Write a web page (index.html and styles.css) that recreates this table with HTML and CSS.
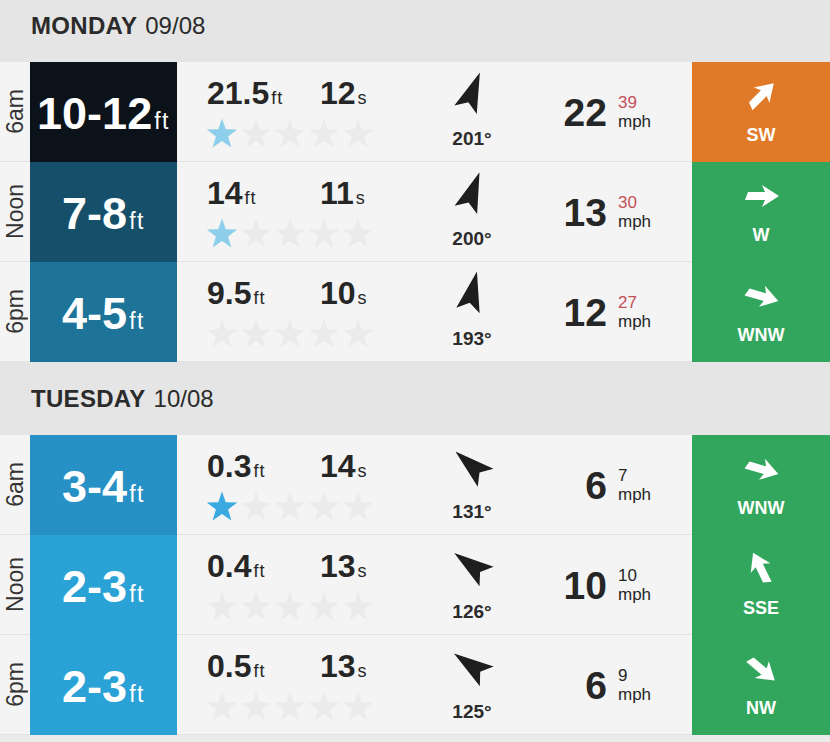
FILE: index.html
```html
<!DOCTYPE html>
<html>
<head>
<meta charset="utf-8">
<link rel="stylesheet" href="styles.css">
</head>
<body>
<svg class="defs" width="0" height="0" aria-hidden="true">
  <symbol id="star" viewBox="0 0 34 30"><polygon points="17,0.5 20.76,11.32 32.22,11.56 23.09,18.48 26.4,29.44 17,22.9 7.6,29.44 10.91,18.48 1.78,11.56 13.24,11.32"/></symbol>
  <symbol id="swarrow" viewBox="-22 -22 44 44"><polygon points="0,-22 12,18 0,10 -12,18"/></symbol>
  <symbol id="warrow" viewBox="-20 -20 40 40"><polygon points="0,-18 11,-1 4,-4 4,16 -4,13 -4,-4 -11,-1"/></symbol>
</svg>

<section class="day">
  <div class="day-head first"><span class="day-name">MONDAY</span><span class="day-date">09/08</span></div>

  <div class="row">
    <div class="time"><span>6am</span></div>
    <div class="wave w-xl"><span class="wt"><span class="v">10-12</span><span class="u">ft</span></span></div>
    <div class="swell">
      <div class="swell-top"><span>21.5<span class="u">ft</span></span><span>12<span class="u">s</span></span></div>
      <div class="stars light"><svg class="on"><use href="#star"/></svg><svg><use href="#star"/></svg><svg><use href="#star"/></svg><svg><use href="#star"/></svg><svg><use href="#star"/></svg></div>
    </div>
    <div class="dir"><svg style="transform: rotate(21deg)"><use href="#swarrow"/></svg><span class="deg">201°</span></div>
    <div class="wind"><span class="n">22</span><span class="g"><span class="gust">39</span><span class="mph">mph</span></span></div>
    <div class="wdir orange"><svg style="transform: rotate(45deg)"><use href="#warrow"/></svg><span class="lbl">SW</span></div>
  </div>

  <div class="row">
    <div class="time"><span>Noon</span></div>
    <div class="wave w-l"><span class="wt"><span class="v">7-8</span><span class="u">ft</span></span></div>
    <div class="swell">
      <div class="swell-top"><span>14<span class="u">ft</span></span><span>11<span class="u">s</span></span></div>
      <div class="stars light"><svg class="on"><use href="#star"/></svg><svg><use href="#star"/></svg><svg><use href="#star"/></svg><svg><use href="#star"/></svg><svg><use href="#star"/></svg></div>
    </div>
    <div class="dir"><svg style="transform: rotate(20deg)"><use href="#swarrow"/></svg><span class="deg">200°</span></div>
    <div class="wind"><span class="n">13</span><span class="g"><span class="gust">30</span><span class="mph">mph</span></span></div>
    <div class="wdir green"><svg style="transform: rotate(90deg)"><use href="#warrow"/></svg><span class="lbl">W</span></div>
  </div>

  <div class="row">
    <div class="time"><span>6pm</span></div>
    <div class="wave w-m"><span class="wt"><span class="v">4-5</span><span class="u">ft</span></span></div>
    <div class="swell">
      <div class="swell-top"><span>9.5<span class="u">ft</span></span><span>10<span class="u">s</span></span></div>
      <div class="stars"><svg><use href="#star"/></svg><svg><use href="#star"/></svg><svg><use href="#star"/></svg><svg><use href="#star"/></svg><svg><use href="#star"/></svg></div>
    </div>
    <div class="dir"><svg style="transform: rotate(13deg)"><use href="#swarrow"/></svg><span class="deg">193°</span></div>
    <div class="wind"><span class="n">12</span><span class="g"><span class="gust">27</span><span class="mph">mph</span></span></div>
    <div class="wdir green"><svg style="transform: rotate(106deg)"><use href="#warrow"/></svg><span class="lbl">WNW</span></div>
  </div>
</section>

<section class="day">
  <div class="day-head"><span class="day-name">TUESDAY</span><span class="day-date">10/08</span></div>

  <div class="row">
    <div class="time"><span>6am</span></div>
    <div class="wave w-s"><span class="wt"><span class="v">3-4</span><span class="u">ft</span></span></div>
    <div class="swell">
      <div class="swell-top"><span>0.3<span class="u">ft</span></span><span>14<span class="u">s</span></span></div>
      <div class="stars bright"><svg class="on"><use href="#star"/></svg><svg><use href="#star"/></svg><svg><use href="#star"/></svg><svg><use href="#star"/></svg><svg><use href="#star"/></svg></div>
    </div>
    <div class="dir"><svg style="transform: rotate(-49deg)"><use href="#swarrow"/></svg><span class="deg">131°</span></div>
    <div class="wind"><span class="n">6</span><span class="g"><span class="gust dark">7</span><span class="mph">mph</span></span></div>
    <div class="wdir green"><svg style="transform: rotate(106deg)"><use href="#warrow"/></svg><span class="lbl">WNW</span></div>
  </div>

  <div class="row">
    <div class="time"><span>Noon</span></div>
    <div class="wave w-xs"><span class="wt"><span class="v">2-3</span><span class="u">ft</span></span></div>
    <div class="swell">
      <div class="swell-top"><span>0.4<span class="u">ft</span></span><span>13<span class="u">s</span></span></div>
      <div class="stars"><svg><use href="#star"/></svg><svg><use href="#star"/></svg><svg><use href="#star"/></svg><svg><use href="#star"/></svg><svg><use href="#star"/></svg></div>
    </div>
    <div class="dir"><svg style="transform: rotate(-54deg)"><use href="#swarrow"/></svg><span class="deg">126°</span></div>
    <div class="wind"><span class="n">10</span><span class="g"><span class="gust dark">10</span><span class="mph">mph</span></span></div>
    <div class="wdir green"><svg style="transform: rotate(-26deg)"><use href="#warrow"/></svg><span class="lbl">SSE</span></div>
  </div>

  <div class="row">
    <div class="time"><span>6pm</span></div>
    <div class="wave w-xs"><span class="wt"><span class="v">2-3</span><span class="u">ft</span></span></div>
    <div class="swell">
      <div class="swell-top"><span>0.5<span class="u">ft</span></span><span>13<span class="u">s</span></span></div>
      <div class="stars"><svg><use href="#star"/></svg><svg><use href="#star"/></svg><svg><use href="#star"/></svg><svg><use href="#star"/></svg><svg><use href="#star"/></svg></div>
    </div>
    <div class="dir"><svg style="transform: rotate(-55deg)"><use href="#swarrow"/></svg><span class="deg">125°</span></div>
    <div class="wind"><span class="n">6</span><span class="g"><span class="gust dark">9</span><span class="mph">mph</span></span></div>
    <div class="wdir green"><svg style="transform: rotate(130deg)"><use href="#warrow"/></svg><span class="lbl">NW</span></div>
  </div>
</section>
</body>
</html>
```

FILE: styles.css
```css
html, body {
  margin: 0;
  padding: 0;
}
body {
  background: #ebebeb;
  font-family: "Liberation Sans", Arial, sans-serif;
  color: #262626;
  width: 830px;
  overflow: hidden;
}
.defs {
  position: absolute;
  width: 0;
  height: 0;
}

.day-head {
  height: 73px;
  display: flex;
  align-items: center;
  padding-left: 31px;
  background: #e5e5e5;
  font-size: 24px;
  color: #2b2b2b;
}
.day-head.first {
  margin-top: -11px;
}
.day-name {
  font-weight: 700;
  letter-spacing: 0.3px;
}
.day-date {
  margin-left: 8px;
  font-weight: 400;
}

.row {
  display: grid;
  grid-template-columns: 30px 147px 263px 64px 188px 138px;
  height: 99px;
  border-bottom: 1px solid #e2e2e2;
  background: #f4f4f4;
}

.time {
  display: flex;
  align-items: center;
  justify-content: center;
}
.time span {
  writing-mode: vertical-rl;
  transform: rotate(180deg);
  font-size: 23px;
  line-height: 1;
  color: #333;
}

.wave {
  margin-bottom: -1px;
  display: flex;
  align-items: center;
  justify-content: center;
  color: #fff;
  padding-top: 2px;
}
.wt {
  line-height: 1;
  white-space: nowrap;
}
.wave .v {
  font-size: 45px;
  font-weight: 700;
}
.wave .u {
  font-size: 23px;
  letter-spacing: 1.5px;
  margin-left: 2px;
}
.w-xl { background: #0b1219; }
.w-l { background: #154f69; }
.w-m { background: #1d7398; }
.w-s { background: #2791c6; }
.w-xs { background: #2ba2d6; }

.swell {
  padding: 15px 0 0 30px;
}
.swell-top {
  display: grid;
  grid-template-columns: 113px auto;
  height: 32px;
  font-size: 32px;
  line-height: 32px;
  font-weight: 700;
}
.swell-top .u {
  font-size: 18px;
  font-weight: 400;
  letter-spacing: 1px;
  margin-left: 2px;
  line-height: 1;
}
.stars {
  display: flex;
  margin: 9px 0 0 -2px;
}
.stars svg {
  width: 34px;
  height: 30px;
  display: block;
  fill: #ebebeb;
}
.stars.light svg.on { fill: #8dcfea; }
.stars.bright svg.on { fill: #3aaae0; }

.dir {
  display: flex;
  flex-direction: column;
  align-items: center;
  padding-top: 9px;
}
.dir svg {
  width: 44px;
  height: 44px;
  display: block;
  fill: #1e1e1e;
}
.deg {
  margin-top: 14px;
  font-size: 19px;
  line-height: 19px;
  font-weight: 700;
  color: #2b2b2b;
}

.wind {
  display: flex;
  align-items: flex-start;
  padding-top: 32px;
}
.wind .n {
  width: 103px;
  text-align: right;
  font-size: 39px;
  line-height: 38px;
  font-weight: 700;
}
.wind .g {
  margin-left: 11px;
  margin-top: -1px;
  font-size: 17px;
  line-height: 19px;
  display: flex;
  flex-direction: column;
}
.gust {
  color: #c4505a;
}
.gust.dark {
  color: #262626;
}

.wdir {
  margin-bottom: -1px;
  display: flex;
  flex-direction: column;
  align-items: center;
  padding-top: 14px;
  color: #fff;
}
.wdir svg {
  width: 40px;
  height: 40px;
  display: block;
  fill: #fff;
}
.wdir .lbl {
  margin-top: 10px;
  font-size: 18px;
  line-height: 18px;
  font-weight: 700;
}
.orange { background: #e07a28; }
.green { background: #33a65e; }
```
